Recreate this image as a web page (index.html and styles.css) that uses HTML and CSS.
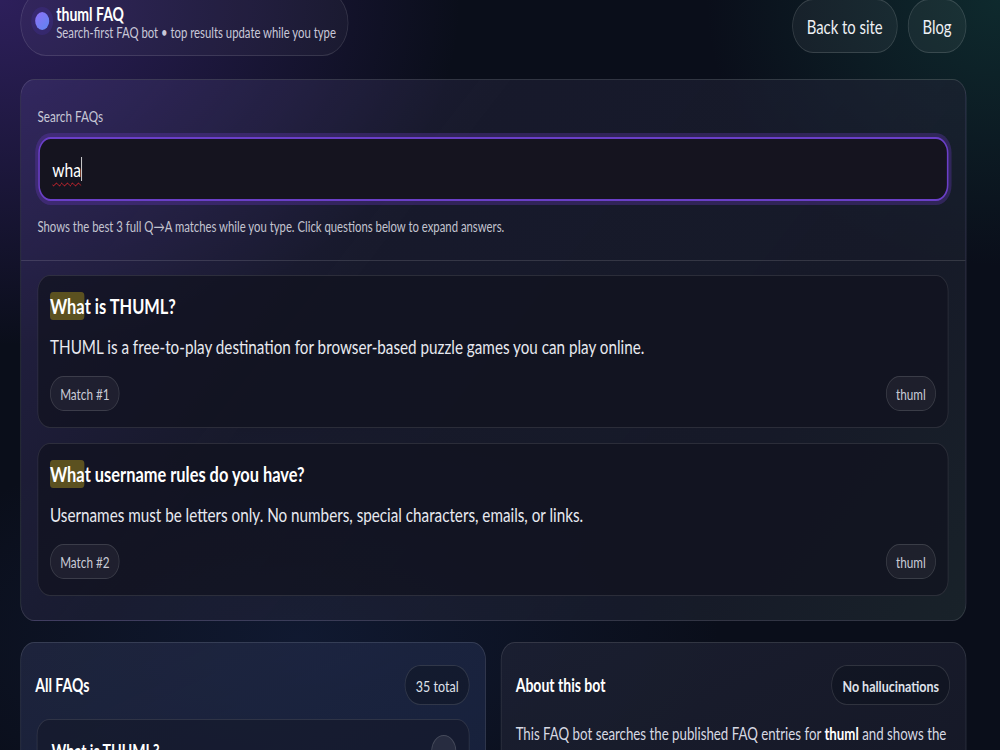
FILE: index.html
```html
<!DOCTYPE html>
<html lang="en">
<head>
<meta charset="utf-8">
<title>thuml FAQ</title>
<link rel="stylesheet" href="styles.css">
</head>
<body>
<div class="viewport">
<div class="page">
  <header class="topbar">
    <div class="brand">
      <span class="brand-dot"></span>
      <div class="brand-text">
        <div class="brand-title">thuml FAQ</div>
        <div class="brand-sub">Search-first FAQ bot • top results update while you type</div>
      </div>
    </div>
    <nav class="nav">
      <a class="nav-btn" href="#">Back to site</a>
      <a class="nav-btn" href="#">Blog</a>
    </nav>
  </header>

  <section class="search-card">
    <div class="search-top">
      <label class="search-label" for="q">Search FAQs</label>
      <div class="search-field">
        <span class="search-value">wha</span><span class="caret"></span>
      </div>
      <p class="search-help">Shows the best 3 full Q→A matches while you type. Click questions below to expand answers.</p>
    </div>
    <div class="results">
      <article class="result">
        <h3 class="result-q"><mark class="hl">Wha</mark>t is THUML?</h3>
        <p class="result-a">THUML is a free-to-play destination for browser-based puzzle games you can play online.</p>
        <div class="result-meta">
          <span class="chip">Match #1</span>
          <span class="chip">thuml</span>
        </div>
      </article>
      <article class="result">
        <h3 class="result-q"><mark class="hl">Wha</mark>t username rules do you have?</h3>
        <p class="result-a">Usernames must be letters only. No numbers, special characters, emails, or links.</p>
        <div class="result-meta">
          <span class="chip">Match #2</span>
          <span class="chip">thuml</span>
        </div>
      </article>
    </div>
  </section>

  <div class="lower">
    <section class="panel panel-faqs">
      <div class="panel-head">
        <h2 class="panel-title">All FAQs</h2>
        <span class="pill">35 total</span>
      </div>
      <div class="faq-item">
        <span class="faq-q">What is THUML?</span>
        <span class="faq-toggle"></span>
      </div>
    </section>
    <section class="panel panel-about">
      <div class="panel-head">
        <h2 class="panel-title">About this bot</h2>
        <span class="pill pill-strong">No hallucinations</span>
      </div>
      <p class="about-text">This FAQ bot searches the published FAQ entries for <b>thuml</b> and shows the exact answers that match your question.</p>
    </section>
  </div>
</div>
</div>
</body>
</html>
```

FILE: styles.css
```css
* { box-sizing: border-box; }

html, body {
  margin: 0;
  height: 100%;
}

body {
  font-family: Lato, "Noto Sans", sans-serif;
  color: #e8e9f0;
  background:
    radial-gradient(ellipse 640px 480px at 0% 0%, rgba(88, 52, 170, 0.45), transparent 72%),
    radial-gradient(ellipse 420px 380px at 100% 0%, rgba(20, 80, 72, 0.42), transparent 70%),
    radial-gradient(ellipse 600px 300px at 30% 85%, rgba(30, 50, 100, 0.3), transparent 70%),
    #0a0e1a;
  overflow: hidden;
}

.viewport {
  width: 1280px;
  transform: scaleX(0.78125);
  transform-origin: 0 0;
}

.page {
  padding: 0 43px 0 26px;
}

/* ---------- top bar ---------- */
.topbar {
  display: flex;
  align-items: center;
  justify-content: space-between;
  margin-top: -10px;
}

.brand {
  display: flex;
  align-items: center;
  gap: 9px;
  height: 66px;
  padding: 0 15px 0 14px;
  border: 1px solid rgba(255, 255, 255, 0.12);
  border-radius: 33px;
  background: rgba(255, 255, 255, 0.035);
}

.brand-dot {
  flex: none;
  width: 18px;
  height: 18px;
  border-radius: 50%;
  background: linear-gradient(140deg, #8f6ff8, #5d86f0);
  box-shadow: 0 0 0 5px rgba(70, 50, 160, 0.3);
  margin: -4px 0 0 4px;
}

.brand-text {
  margin-top: -2px;
  white-space: nowrap;
}

.brand-title {
  font-weight: 700;
  font-size: 18px;
  line-height: 20px;
  color: #ffffff;
}

.brand-sub {
  font-size: 14.5px;
  line-height: 17px;
  color: #c9c8d8;
}

.nav {
  display: flex;
  gap: 13px;
  margin-top: 6px;
}

.nav-btn {
  display: flex;
  align-items: center;
  justify-content: center;
  height: 54px;
  padding: 0 18px;
  border-radius: 27px;
  border: 1px solid rgba(255, 255, 255, 0.14);
  background: rgba(255, 255, 255, 0.05);
  color: #eef0f4;
  font-size: 19px;
  text-decoration: none;
}

/* ---------- search card ---------- */
.search-card {
  margin-top: 23px;
  border: 1px solid rgba(255, 255, 255, 0.12);
  border-radius: 18px;
  background:
    linear-gradient(135deg, rgba(62, 50, 112, 0.55) 0%, rgba(38, 38, 62, 0.5) 35%, rgba(30, 34, 50, 0.6) 75%, rgba(34, 48, 52, 0.6) 100%);
  overflow: hidden;
}

.search-top {
  padding: 26px 22px 24px 21px;
  border-bottom: 1px solid rgba(255, 255, 255, 0.13);
}

.search-label {
  display: block;
  font-size: 15px;
  line-height: 20px;
  color: #c6c7d6;
}

.search-field {
  display: flex;
  align-items: center;
  margin: 11px 0 0 1px;
  height: 64px;
  padding: 0 16px;
  border: 2px solid #6a3fc7;
  border-radius: 16px;
  background: #15141f;
  box-shadow: 0 0 0 4px rgba(110, 60, 200, 0.3);
}

.search-value {
  font-size: 20px;
  color: #ffffff;
  text-decoration: underline wavy #e0242c;
  text-decoration-thickness: 1px;
  text-underline-offset: 5px;
}

.caret {
  width: 1px;
  height: 24px;
  background: #ffffff;
}

.search-help {
  margin: 17px 0 0;
  font-size: 14.5px;
  line-height: 18px;
  color: #c3c4d0;
}

/* ---------- results ---------- */
.results {
  display: flex;
  flex-direction: column;
  gap: 15px;
  padding: 14px 22px 24px 21px;
}

.result {
  height: 153px;
  padding: 16px 15px 16px 15px;
  border: 1px solid rgba(255, 255, 255, 0.11);
  border-radius: 16px;
  background: rgba(16, 18, 30, 0.72);
  display: flex;
  flex-direction: column;
}

.result-q {
  margin: 0;
  font-size: 21px;
  line-height: 28px;
  font-weight: 700;
  color: #ffffff;
}

.hl {
  display: inline-block;
  background: #5b5120;
  color: #ffffff;
  border-radius: 4px;
}

.result-a {
  margin: 14px 0 0;
  font-size: 19.5px;
  line-height: 26px;
  color: #e7e9f0;
}

.result-meta {
  margin-top: auto;
  display: flex;
  justify-content: space-between;
}

.chip {
  display: flex;
  align-items: center;
  height: 35px;
  padding: 0 12px;
  border-radius: 18px;
  border: 1px solid rgba(255, 255, 255, 0.13);
  background: rgba(255, 255, 255, 0.05);
  font-size: 15px;
  color: #c9cbd6;
}

/* ---------- lower panels ---------- */
.lower {
  display: grid;
  grid-template-columns: 1fr 1fr;
  gap: 19px;
  margin-top: 21px;
}

.panel {
  height: 140px;
  border: 1px solid rgba(255, 255, 255, 0.12);
  border-radius: 18px;
  padding: 22px 20px 0 18px;
}

.panel-faqs {
  background: linear-gradient(160deg, rgba(34, 40, 66, 0.8), rgba(28, 40, 72, 0.7));
}

.panel-about {
  background: linear-gradient(160deg, rgba(30, 34, 52, 0.8), rgba(24, 28, 42, 0.8));
}

.panel-head {
  display: flex;
  align-items: center;
  justify-content: space-between;
}

.panel-title {
  margin: 0;
  font-size: 18px;
  font-weight: 700;
  color: #ffffff;
}

.pill {
  display: flex;
  align-items: center;
  height: 40px;
  padding: 0 13px;
  border-radius: 20px;
  border: 1px solid rgba(255, 255, 255, 0.13);
  background: rgba(10, 14, 26, 0.4);
  font-size: 16px;
  color: #dfe1ea;
}

.pill-strong {
  font-weight: 700;
}

.faq-item {
  display: flex;
  align-items: center;
  justify-content: space-between;
  margin: 14px 0 0 2px;
  height: 64px;
  padding: 0 16px 0 18px;
  border: 1px solid rgba(255, 255, 255, 0.11);
  border-radius: 16px;
  background: rgba(20, 24, 40, 0.6);
}

.faq-q {
  font-size: 18px;
  font-weight: 700;
  color: #ffffff;
}

.faq-toggle {
  width: 32px;
  height: 32px;
  border-radius: 50%;
  border: 1px solid rgba(255, 255, 255, 0.14);
  background: rgba(255, 255, 255, 0.08);
}

.about-text {
  margin: 16px 0 0;
  font-size: 17px;
  line-height: 26px;
  color: #d7d9e3;
}

.about-text b {
  color: #ffffff;
}
```
